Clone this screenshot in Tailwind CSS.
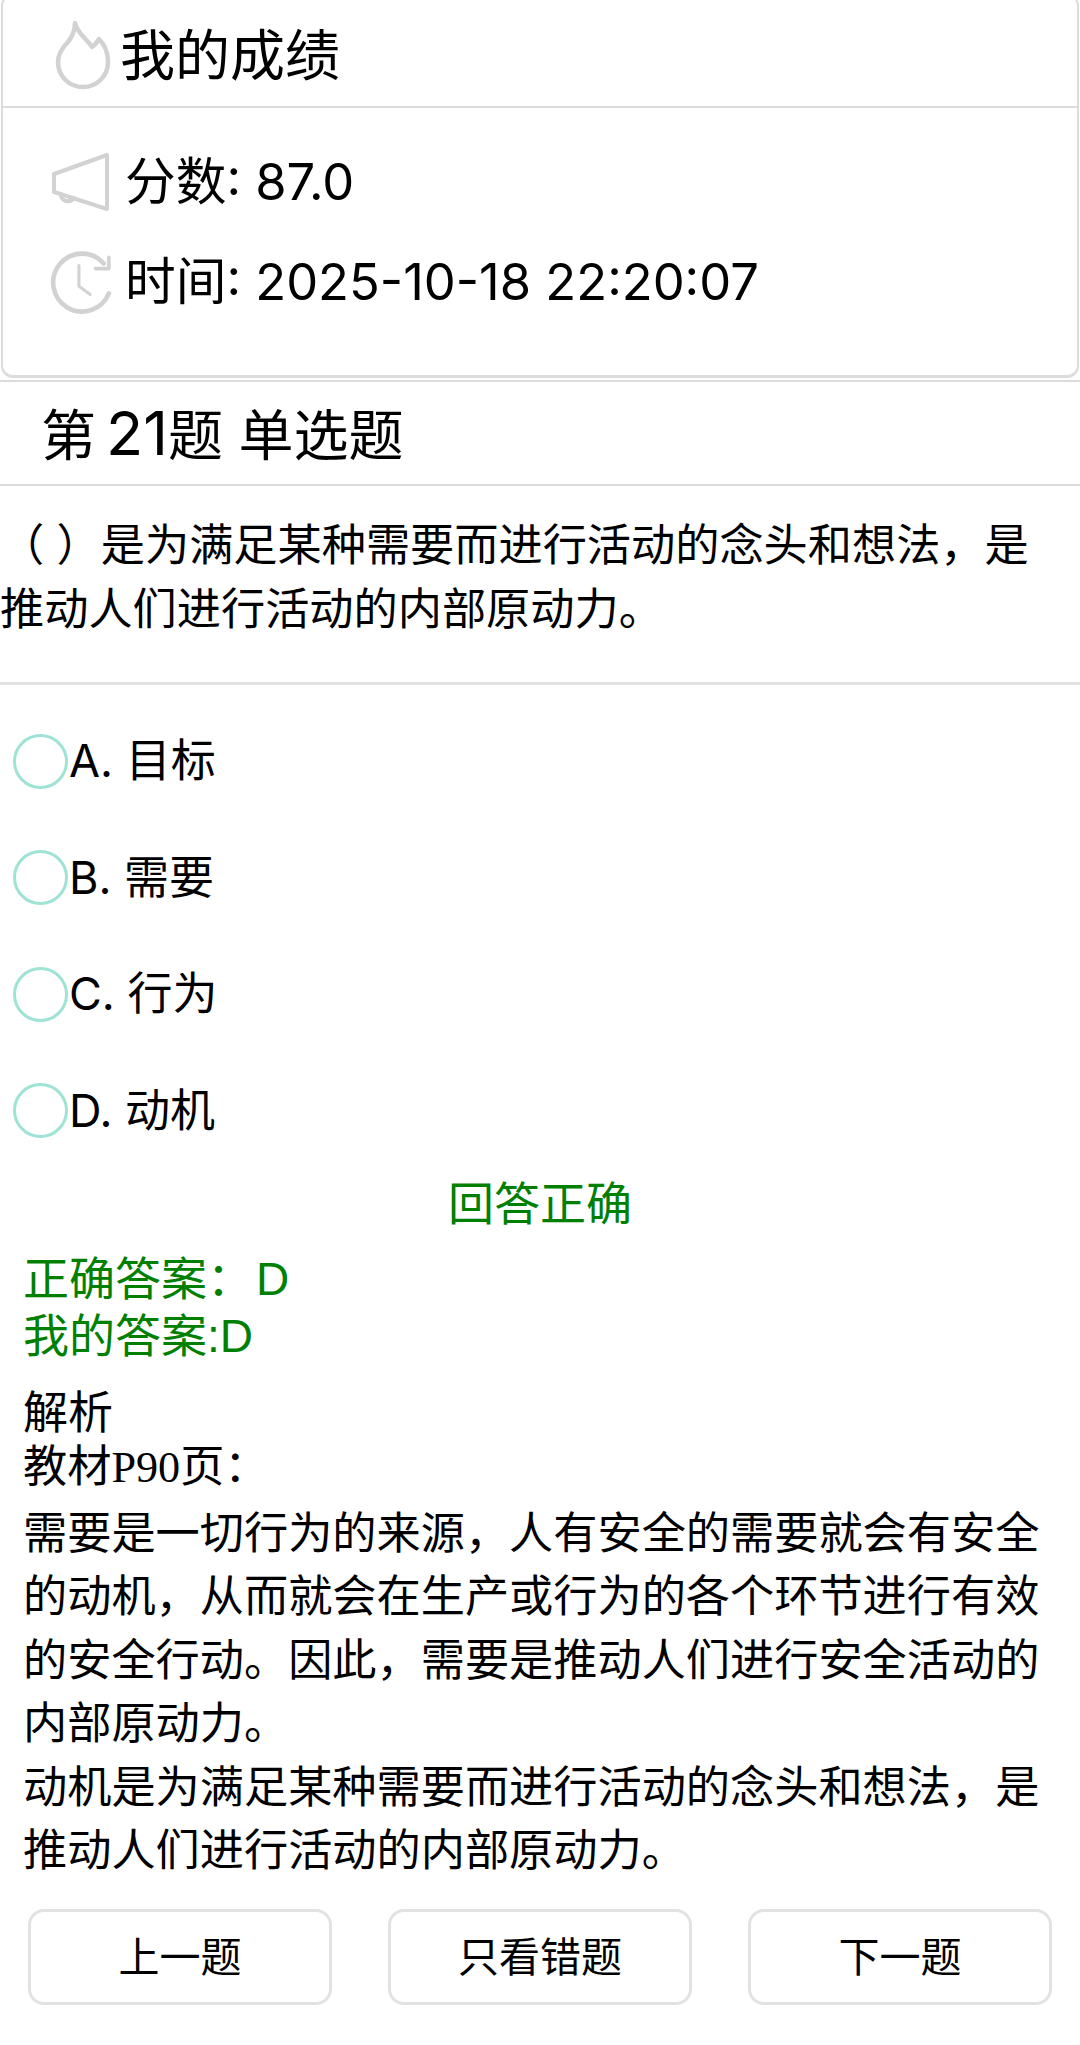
<!DOCTYPE html>
<html lang="zh-CN">
<head>
  <meta charset="UTF-8" />
  <title>我的成绩</title>
  <script src="https://cdn.jsdelivr.net/npm/@tailwindcss/browser@4"></script>
</head>
<body class="bg-white text-black font-['Inter','Noto_Sans_CJK_SC',sans-serif]">
  <div class="w-[1080px] h-[2045px] overflow-hidden">

    <!-- 成绩卡片 -->
    <div class="-mt-[6px] h-[384px] mx-[1px] border-2 border-[#dcdcdc] border-b-[3px] rounded-[12px]">
      <div class="h-[112px] pt-[8px] border-b-2 border-[#dcdcdc] flex items-center pl-[52px] gap-[9px] text-[55px]">
        <svg class="w-[56px] h-[70px]" viewBox="0 0 56 70" fill="none" stroke="#d2d2d2" stroke-width="4.5" stroke-linejoin="round" stroke-linecap="round">
          <path d="M20 3C22 13 31 18 37 27C40 25 42 22 44 19C50 25 53 33 53 42C53 56 42 67 28 67C14 67 3 56 3 42C3 33 8 27 13 22C17 17 20 11 20 3z"/>
        </svg>
        <span>我的成绩</span>
      </div>
      <div class="pl-[49px]">
        <div class="mt-[42px] h-[64px] flex items-center text-[50.7px]">
          <svg class="w-[58px] h-[60px]" viewBox="0 0 58 60" fill="none" stroke="#d2d2d2" stroke-width="4" stroke-linejoin="round" stroke-linecap="round">
            <path d="M2 22L55 3V57L2 40z"/>
            <path d="M9 42c-1 7 9 10 13 4"/>
          </svg>
          <span class="ml-[15px]">分数: 87.0</span>
        </div>
        <div class="mt-[36px] h-[64px] flex items-center text-[50.7px]">
          <svg class="-ml-[2px] w-[62px] h-[64px]" viewBox="0 0 60 62" fill="none" stroke="#d2d2d2" stroke-width="4.5" stroke-linecap="round" stroke-linejoin="round">
            <path d="M52 13A28 28 0 1 0 57 42"/>
            <path d="M44 18l13 0 0-11" stroke-width="3.5"/>
            <path d="M28 15v20l11 8" stroke-width="3"/>
          </svg>
          <span class="ml-[13px]">时间: 2025-10-18 22:20:07</span>
        </div>
      </div>
    </div>

    <!-- 题目 -->
    <div class="mt-[2px] border-t-2 border-[#dcdcdc]">
      <div class="h-[104px] border-b-2 border-[#dcdcdc] flex items-center pl-[41px] text-[55px]">
        <span class="leading-none">第<span class="ml-[10px] text-[61px]">21</span>题 单选题</span>
      </div>
      <div class="h-[199px] border-b-[3px] border-[#e2e2e2] pt-[27px] text-[44.2px] leading-[64px]">
        <p>（ ）是为满足某种需要而进行活动的念头和想法，是</p>
        <p>推动人们进行活动的内部原动力。</p>
      </div>
    </div>

    <!-- 选项 -->
    <div class="mt-[49px] pl-[13px] flex flex-col gap-[62.5px]">
      <div class="h-[54px] flex items-center text-[45px]">
        <span class="w-[55px] h-[55px] rounded-full border-[3px] border-[#9fe3d5]"></span><span class="ml-[1px]">A. 目标</span>
      </div>
      <div class="h-[54px] flex items-center text-[45px]">
        <span class="w-[55px] h-[55px] rounded-full border-[3px] border-[#9fe3d5]"></span><span class="ml-[1px]">B. 需要</span>
      </div>
      <div class="h-[54px] flex items-center text-[45px]">
        <span class="w-[55px] h-[55px] rounded-full border-[3px] border-[#9fe3d5]"></span><span class="ml-[1px]">C. 行为</span>
      </div>
      <div class="h-[54px] flex items-center text-[45px]">
        <span class="w-[55px] h-[55px] rounded-full border-[3px] border-[#9fe3d5]"></span><span class="ml-[1px]">D. 动机</span>
      </div>
    </div>

    <!-- 结果 -->
    <div class="mt-[33px] text-center text-[46px] leading-[64px] text-[#008000]">回答正确</div>
    <div class="mt-[16px] pl-[23px] text-[46px] leading-[57px] text-[#008000] font-['Liberation_Sans','Noto_Sans_CJK_SC',sans-serif]">
      <p>正确答案：<span class="ml-[3px]">D</span></p>
      <p>我的答案:D</p>
    </div>

    <!-- 解析 -->
    <div class="mt-[21px] pl-[23px] pr-[22px] text-[44.2px] font-['Liberation_Serif','Noto_Sans_CJK_SC',serif]">
      <p class="leading-[56px] text-[45px]">解析</p>
      <p class="leading-[52px]">教材P90页：</p>
      <p class="mt-[9px] leading-[63.5px]">需要是一切行为的来源，人有安全的需要就会有安全的动机，从而就会在生产或行为的各个环节进行有效的安全行动。因此，需要是推动人们进行安全活动的内部原动力。</p>
      <p class="leading-[63.5px]">动机是为满足某种需要而进行活动的念头和想法，是推动人们进行活动的内部原动力。</p>
    </div>

    <!-- 底部按钮 -->
    <div class="mt-[25px] px-[28px] flex gap-[56px]">
      <button class="w-[304px] h-[96px] pt-[3px] border-[3px] border-[#e2e2e2] rounded-[16px] text-[41px]">上一题</button>
      <button class="w-[304px] h-[96px] pt-[3px] border-[3px] border-[#e2e2e2] rounded-[16px] text-[41px]">只看错题</button>
      <button class="w-[304px] h-[96px] pt-[3px] border-[3px] border-[#e2e2e2] rounded-[16px] text-[41px]">下一题</button>
    </div>
  </div>
</body>
</html>
